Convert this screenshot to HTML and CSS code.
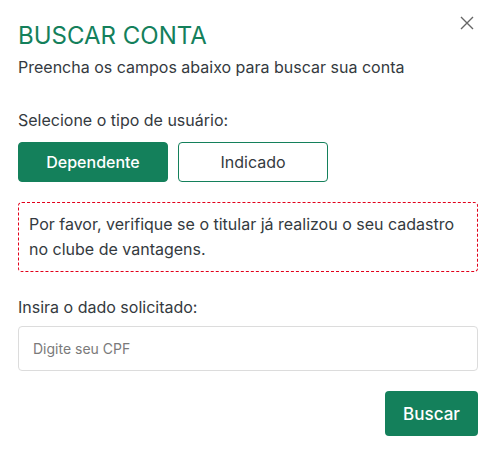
FILE: index.html
```html
<!DOCTYPE html>
<html lang="pt-BR">
<head>
  <meta charset="UTF-8">
  <title>Buscar conta</title>
  <link rel="stylesheet" href="styles.css">
</head>
<body>
  <div class="modal">
    <button class="close" aria-label="Fechar">
      <svg width="14" height="14" viewBox="0 0 14 14"><path d="M1 1L13 13M13 1L1 13" stroke="#666" stroke-width="1.4" fill="none"/></svg>
    </button>

    <h2 class="title">BUSCAR CONTA</h2>
    <p class="subtitle">Preencha os campos abaixo para buscar sua conta</p>

    <!-- Tipo de usuário -->
    <p class="label label-type">Selecione o tipo de usuário:</p>
    <div class="toggle">
      <button class="opt active">Dependente</button>
      <button class="opt">Indicado</button>
    </div>

    <div class="notice">
      Por favor, verifique se o titular já realizou o seu cadastro no clube de vantagens.
    </div>

    <p class="label">Insira o dado solicitado:</p>
    <input class="field" type="text" placeholder="Digite seu CPF">

    <div class="actions">
      <button class="submit">Buscar</button>
    </div>
  </div>
</body>
</html>
```

FILE: styles.css
```css
body {
  margin: 0;
  font-family: Inter, 'Noto Sans', sans-serif;
  color: #343a40;
  background: #fff;
}
.modal {
  position: relative;
  width: 498px;
  height: 456px;
  box-sizing: border-box;
  padding: 21px 20px 0 18px;
  background: #fff;
}
.close {
  position: absolute;
  top: 16px;
  right: 24px;
  background: none;
  border: none;
  padding: 0;
  width: 14px;
  height: 14px;
  cursor: pointer;
}
.close svg {
  display: block;
}
.title {
  margin: 0;
  font-size: 24px;
  font-weight: 400;
  line-height: 29px;
  color: #14805b;
}
.subtitle {
  margin: 7px 0 0;
  font-size: 16px;
  line-height: 20px;
}
.label {
  margin: 0;
  font-size: 16px;
  line-height: 20px;
}
.label-type {
  margin-top: 33px;
}
.toggle {
  display: flex;
  gap: 10px;
  margin-top: 12px;
}
.opt {
  width: 150px;
  height: 40px;
  border: 1px solid #14805b;
  border-radius: 4px;
  background: #fff;
  color: #343a40;
  font-family: inherit;
  font-size: 16px;
  cursor: pointer;
}
.opt.active {
  background: #14805b;
  color: #fff;
  font-weight: 500;
}
.notice {
  margin-top: 20px;
  padding: 9px 10px;
  border: 1px dashed #e2001a;
  border-radius: 4px;
  font-size: 16px;
  line-height: 25px;
}
.notice + .label {
  margin-top: 25px;
}
.field {
  display: block;
  width: 100%;
  box-sizing: border-box;
  height: 45px;
  margin-top: 9px;
  padding: 0 14px;
  border: 1px solid #dcdcdc;
  border-radius: 4px;
  font-family: inherit;
  font-size: 14px;
  color: #343a40;
}
.field::placeholder {
  color: #7a7a7a;
}
.actions {
  display: flex;
  justify-content: flex-end;
  margin-top: 20px;
}
.submit {
  width: 93px;
  height: 45px;
  border: none;
  border-radius: 4px;
  background: #14805b;
  color: #fff;
  font-family: inherit;
  font-size: 17px;
  font-weight: 500;
  cursor: pointer;
}
```
